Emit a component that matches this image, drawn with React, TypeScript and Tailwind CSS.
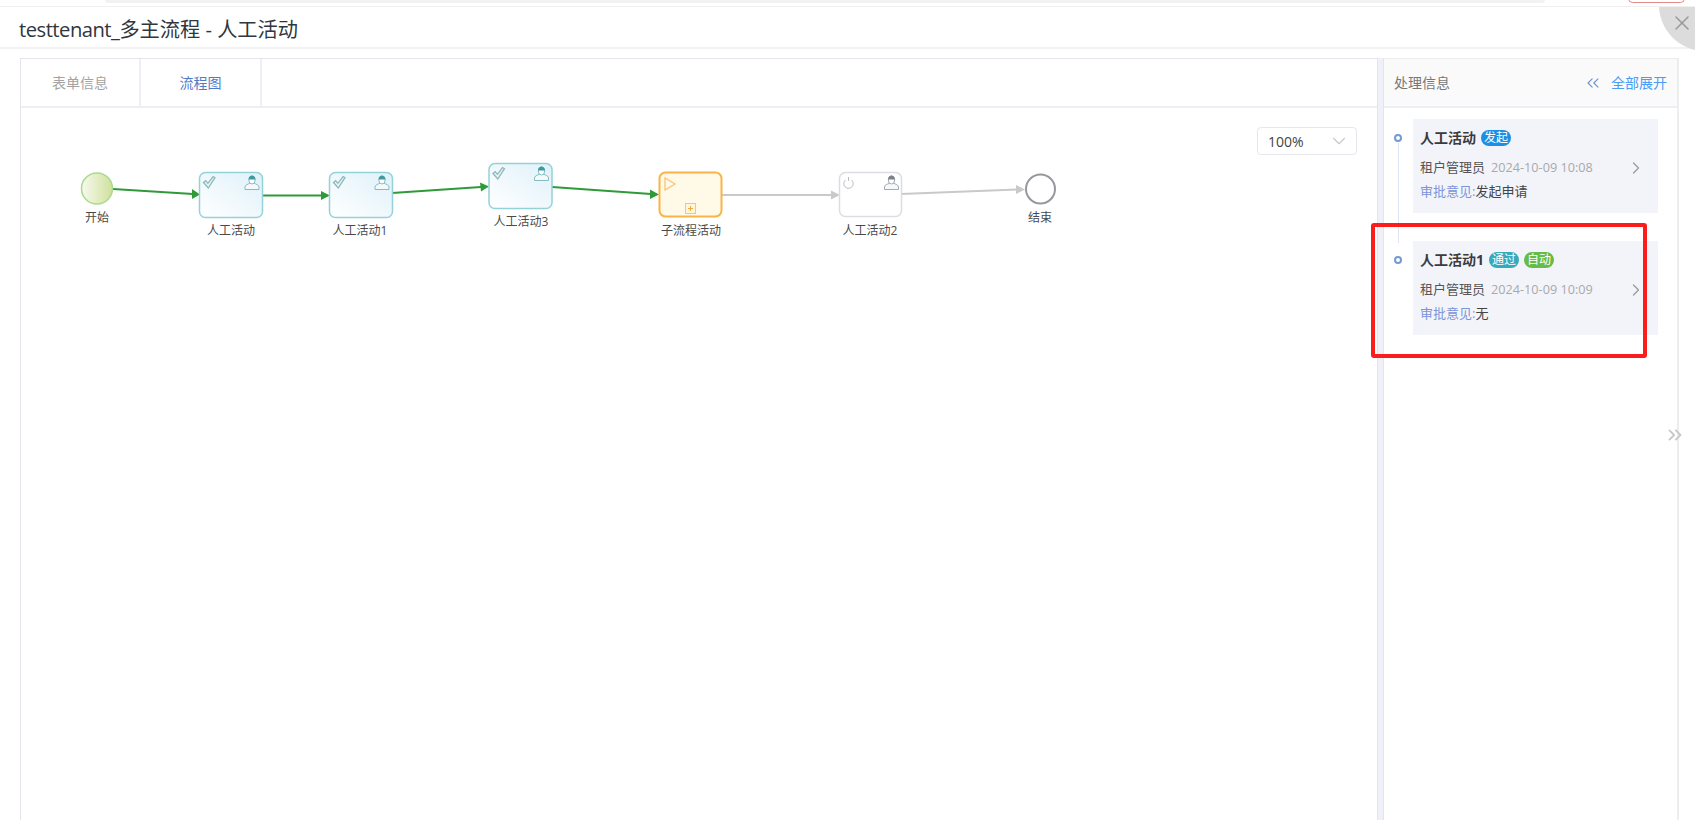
import { ChevronDown, ChevronRight, ChevronsLeft, ChevronsRight, X } from 'lucide-react'

const font = { fontFamily: '"Open Sans", "Noto Sans CJK SC", sans-serif' }

const labels = [
  { text: '开始', x: 96, y: 218 },
  { text: '人工活动', x: 230, y: 231 },
  { text: '人工活动1', x: 359, y: 231 },
  { text: '人工活动3', x: 520, y: 222 },
  { text: '子流程活动', x: 690, y: 231 },
  { text: '人工活动2', x: 869, y: 231 },
  { text: '结束', x: 1039, y: 218 },
]

function Person({ x, y, color, dark }: { x: number; y: number; color: string; dark: string }) {
  return (
    <g transform={`translate(${x} ${y})`} fill="none" stroke={color} strokeWidth="1">
      <path d="M0.500 14.500v-2.500c0-2 3-3 4.800-3.600h4.400c1.800.6 4.800 1.600 4.800 3.600v2.500z" fill="#f4fafb" />
      <ellipse cx="7.500" cy="5" rx="3.200" ry="4" fill="#fff" />
      <path d="M4 4.500c.2-2.700 1.800-4 3.500-4s3.300 1.300 3.500 4z" fill={dark} stroke="none" />
    </g>
  )
}

function Check({ x, y }: { x: number; y: number }) {
  return (
    <path
      transform={`translate(${x} ${y})`}
      d="M0.500 6.500l2.200-1.800 2.200 2.600 5.200-6.800 1.900 1.200-6.700 10.300z"
      fill="#e6f3f3"
      stroke="#8db8bd"
      strokeWidth="1.300"
    />
  )
}

function Task({ x, y }: { x: number; y: number }) {
  return (
    <g>
      <rect x={x} y={y} width="63" height="45" rx="6" fill="url(#taskFill)" stroke="#93d3d8" strokeWidth="1.500" />
      <Check x={x + 3.500} y={y + 3.500} />
      <Person x={x + 45} y={y + 2.500} color="#86bcc1" dark="#3f9aa0" />
    </g>
  )
}

function Arrow({ d, tip, color }: { d: string; tip: string; color: string }) {
  return (
    <g>
      <path d={d} stroke={color} strokeWidth="1.800" fill="none" />
      <polygon points={tip} fill={color} />
    </g>
  )
}

function Flow() {
  return (
    <svg className="absolute left-0 top-0" width="1120" height="260" viewBox="21 108 1120 260">
      <defs>
        <linearGradient id="startFill" x1="0" x2="1" y1="0" y2="0">
          <stop offset="0" stopColor="#f7faf0" />
          <stop offset="1" stopColor="#cfe09b" />
        </linearGradient>
        <linearGradient id="taskFill" x1="0" x2="1" y1="1" y2="0">
          <stop offset="0" stopColor="#ffffff" />
          <stop offset="1" stopColor="#dff1fa" />
        </linearGradient>
      </defs>

      <Arrow d="M113 189L193 194" tip="192,189 200,194.500 192,199" color="#2f9a38" />
      <Arrow d="M262 195.500H322" tip="321,191 330,195.500 321,200" color="#2f9a38" />
      <Arrow d="M392 193L481 187" tip="480,182.500 489,186.500 481,191.500" color="#2f9a38" />
      <Arrow d="M552 187L651 194" tip="650,189.500 659,194.500 650,199" color="#2f9a38" />
      <Arrow d="M722 195H831" tip="831,190.500 840,195 831,199.500" color="#c9c9c9" />
      <Arrow d="M901 194L1017 189.500" tip="1016,185 1025,189.500 1016,194" color="#c9c9c9" />

      <circle cx="97" cy="188.500" r="15.500" fill="url(#startFill)" stroke="#a9da8e" strokeWidth="1.500" />

      <Task x={199.500} y={172.500} />
      <Task x={329.500} y={172.500} />
      <Task x={489} y={163.500} />

      <rect x="659.500" y="172.500" width="62" height="44" rx="6" fill="#fffae8" stroke="#f9b348" strokeWidth="2" />
      <path d="M665 178v12l10-6z" fill="none" stroke="#f9c478" strokeWidth="1.300" />
      <rect x="685.500" y="203.500" width="10" height="10" fill="#fff6dc" stroke="#f9c478" />
      <path d="M688 208.500h5M690.500 206v5" stroke="#f5a83a" />

      <rect x="839.500" y="172.500" width="62" height="44" rx="6" fill="#ffffff" stroke="#dcdde2" strokeWidth="1.500" />
      <path d="M845.500 180a4.700 4.700 0 1 0 6 0" fill="none" stroke="#b9bcc2" strokeWidth="1" />
      <path d="M848.500 177v4" stroke="#b9bcc2" />
      <Person x={884} y={175} color="#a5a9b1" dark="#7c8088" />

      <circle cx="1040.500" cy="189" r="14.500" fill="#ffffff" stroke="#96989e" strokeWidth="2" />
    </svg>
  )
}

function Tag({ text, color }: { text: string; color: string }) {
  return (
    <span className="ml-[5px] flex h-4 w-[30px] items-center justify-center rounded-full text-[12px] font-normal text-white" style={{ backgroundColor: color }}>
      {text}
    </span>
  )
}

function Record({ title, tags, time, opinion }: { title: string; tags: { text: string; color: string }[]; time: string; opinion: string }) {
  return (
    <div className="relative flex">
      <div className="flex w-[29px] shrink-0 justify-center pr-[1px] pt-[15px]">
        <div className="relative z-10 h-2 w-2 rounded-full border-2 border-[#7499d6] bg-white" />
      </div>
      <div className="relative h-[94px] w-[245px] bg-[#f3f4fa] pl-[7px] pt-[9px]">
        <div className="flex h-5 items-center">
          <span className="text-[14px] leading-5 font-bold text-[#3b3b3b]">{title}</span>
          {tags.map((t) => (
            <Tag key={t.text} text={t.text} color={t.color} />
          ))}
        </div>
        <div className="mt-[10px] flex h-5 items-center text-[13px]">
          <span className="text-[#555]">租户管理员</span>
          <span className="ml-[6px] text-[12.7px] text-[#a9a9a9]">{time}</span>
        </div>
        <div className="mt-[4px] flex h-5 items-center text-[13px]">
          <span className="text-[#7a94d8]">审批意见:</span>
          <span className="text-[#444]">{opinion}</span>
        </div>
        <ChevronRight className="absolute right-[12px] top-[39px] text-[#999]" size={20} strokeWidth={1.500} />
      </div>
    </div>
  )
}

export default function App() {
  return (
    <div className="relative flex h-[820px] w-[1695px] flex-col overflow-hidden bg-white text-[#333]" style={font}>
      {/* sliver of the page behind the dialog */}
      <div className="relative z-10 h-[7px] shrink-0 border-b border-[#f0f0f0] bg-white">
        <div className="ml-[105px] h-[3px] w-[1440px] rounded-b-md bg-[#f1f2f4]" />
        <div className="absolute left-[1628px] top-[-6px] h-[9px] w-[57px] rounded-md border border-[#e28b8b]" />
      </div>

      <div className="flex h-[42px] shrink-0 items-center border-b-2 border-[#f2f2f3] pl-[19px] pt-[5px]">
        <h1 className="text-[20.2px] font-normal leading-none text-[#2f3640]">
          <span className="tracking-[-0.5px]">testtenant_</span>多主流程 - 人工活动
        </h1>
      </div>

      {/* corner close button */}
      <div className="absolute left-[1659px] top-[-41px] h-[92px] w-[92px] rounded-full bg-[#dcdcdc]">
        <X className="absolute left-[11px] top-[52px] text-[#999]" size={24} strokeWidth={1.500} />
      </div>

      <div className="flex min-h-0 flex-1 pl-[20px] pt-[9px]">
        {/* left panel */}
        <div className="flex w-[1357px] shrink-0 flex-col border-l border-t border-[#e3e4ec]">
          <div className="flex h-[49px] shrink-0 border-b-2 border-[#eeeff4] text-[14px]">
            <div className="flex w-[120px] items-center justify-center border-r-2 border-[#eeeff4] text-[#a3a3a3]">表单信息</div>
            <div className="flex w-[121px] items-center justify-center border-r-2 border-[#eeeff4] text-[#4f7cc9]">流程图</div>
          </div>
          <div className="relative flex-1">
            <Flow />
            {labels.map((l) => (
              <span
                key={l.text}
                className="absolute -translate-x-1/2 -translate-y-1/2 whitespace-nowrap text-[12px] text-[#4a4a4a]"
                style={{ left: l.x - 20, top: l.y - 108 }}
              >
                {l.text}
              </span>
            ))}
            <div className="absolute right-[20px] top-[19px] flex h-[28px] w-[100px] items-center justify-between rounded border border-[#e6e7ec] pl-[10px] pr-[6px] text-[14px] text-[#444]">
              100%
              <ChevronDown className="text-[#c5c7cc]" size={22} strokeWidth={1.200} />
            </div>
          </div>
        </div>

        <div className="w-[7px] shrink-0 border-x border-[#e3e4ec] bg-[#f0f1f8]" />

        {/* right panel */}
        <div className="flex w-[295px] shrink-0 flex-col border-r-2 border-t border-[#eceded]">
          <div className="flex h-[49px] shrink-0 items-center justify-between border-b-2 border-[#eeeff4] bg-[#fafafa] pl-[10px] pr-[10px] text-[14px]">
            <span className="text-[#777]">处理信息</span>
            <div className="flex items-center text-[#4a9cf5]">
              <ChevronsLeft className="mr-[8px] text-[#6f94d4]" size={20} strokeWidth={1.400} />
              全部展开
            </div>
          </div>
          <div className="relative flex flex-col gap-[28px] pt-[11px]">
            <div className="absolute left-[14px] top-[35px] h-[100px] w-px bg-[#dbe5f5]" />
            <Record title="人工活动" tags={[{ text: '发起', color: '#1a8fe3' }]} time="2024-10-09 10:08" opinion="发起申请" />
            <Record
              title="人工活动1"
              tags={[
                { text: '通过', color: '#3aa8bb' },
                { text: '自动', color: '#66bc45' },
              ]}
              time="2024-10-09 10:09"
              opinion="无"
            />
          </div>
        </div>
      </div>

      <ChevronsRight className="absolute left-[1664px] top-[424px] text-[#c8c8c8]" size={22} strokeWidth={2} />

      {/* red annotation over the second record */}
      <div className="absolute left-[1371px] top-[223px] h-[135px] w-[276px] rounded-[3px] border-[4px] border-[#fb1c1c]" />
    </div>
  )
}
